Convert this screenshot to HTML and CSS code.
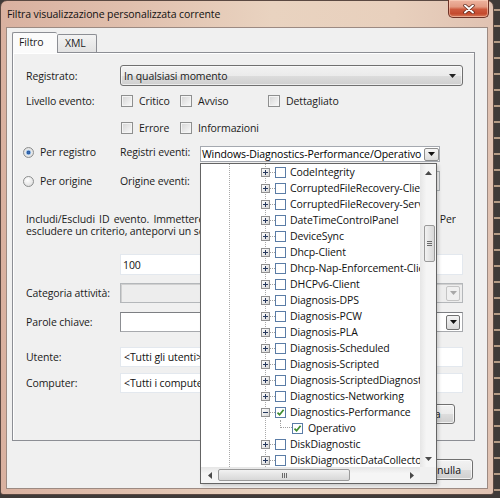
FILE: index.html
```html
<!DOCTYPE html>
<html>
<head>
<meta charset="utf-8">
<title>Filtra visualizzazione personalizzata corrente</title>
<link rel="stylesheet" href="styles.css">
</head>
<body>
<div class="desk">
  <div class="window">
    <div class="titlebar">
      <span class="title">Filtra visualizzazione personalizzata corrente</span>
      <div class="close">
        <svg width="12" height="10" viewBox="0 0 12 10"><path d="M2 1.5 L10 8.5 M10 1.5 L2 8.5" stroke="#5a2418" stroke-width="3.4" stroke-linecap="round"/><path d="M2 1.5 L10 8.5 M10 1.5 L2 8.5" stroke="#ffffff" stroke-width="1.9" stroke-linecap="round"/></svg>
      </div>
    </div>
    <div class="client">
      <div class="tabs">
        <div class="tab active">Filtro</div>
        <div class="tab">XML</div>
      </div>
      <div class="panel">
        <div class="row r-reg">
          <span class="label">Registrato:</span>
          <div class="combo ro"><span class="ctext">In qualsiasi momento</span><svg class="arrow" width="7" height="4" viewBox="0 0 7 4"><path d="M0 0 H7 L3.5 4 Z" fill="#222"/></svg></div>
        </div>
        <div class="row r-chk1">
          <span class="label">Livello evento:</span>
          <label class="chk w59"><span class="box"></span>Critico</label>
          <label class="chk w88"><span class="box"></span>Avviso</label>
          <label class="chk"><span class="box"></span>Dettagliato</label>
        </div>
        <div class="row r-chk2">
          <span class="label"></span>
          <label class="chk w59"><span class="box"></span>Errore</label>
          <label class="chk"><span class="box"></span>Informazioni</label>
        </div>
        <div class="row r-rad1">
          <label class="radio"><span class="dot on"></span>Per registro</label>
          <span class="sublabel">Registri eventi:</span>
          <div class="edcombo"><span class="ctext">Windows-Diagnostics-Performance/Operativo</span><span class="dbtn"><svg width="7" height="4" viewBox="0 0 7 4"><path d="M0 0 H7 L3.5 4 Z" fill="#111"/></svg></span></div>
        </div>
        <div class="row r-rad2">
          <label class="radio"><span class="dot"></span>Per origine</label>
          <span class="sublabel">Origine eventi:</span>
          <div class="edcombo dis"></div>
        </div>
        <div class="para">
          <span class="pline1">Includi/Escludi ID evento. Immettere numeri ID e/o intervalli ID separati da virgole. Per</span>
          <span class="pline2">escludere un criterio, anteporvi un segno meno. Ad esempio 1,3,5-99,-76</span>
        </div>
        <div class="row r-100">
          <span class="label"></span>
          <div class="field">100</div>
        </div>
        <div class="row r-cat">
          <span class="label">Categoria attività:</span>
          <div class="field dis"><span class="fbtn dis"><svg width="7" height="4" viewBox="0 0 7 4"><path d="M0 0 H7 L3.5 4 Z" fill="#a8a8a8"/></svg></span></div>
        </div>
        <div class="row r-kw">
          <span class="label">Parole chiave:</span>
          <div class="field dark"><span class="fbtn"><svg width="7" height="4" viewBox="0 0 7 4"><path d="M0 0 H7 L3.5 4 Z" fill="#111"/></svg></span></div>
        </div>
        <div class="row r-usr">
          <span class="label">Utente:</span>
          <div class="field">&lt;Tutti gli utenti&gt;</div>
        </div>
        <div class="row r-cmp">
          <span class="label">Computer:</span>
          <div class="field">&lt;Tutti i computer&gt;</div>
        </div>
        <div class="row r-clr">
          <button class="btn clr">Cancella</button>
        </div>
      </div>
      <div class="buttons">
        <button class="btn">OK</button>
        <button class="btn cancel">Annulla</button>
      </div>
    </div>

    <div class="droplist">
      <div class="dl-main">
        <div class="tree">
          <div class="node"><span class="exp"></span><span class="hl"></span><span class="cb"></span><span class="lbl">CodeIntegrity</span></div>
          <div class="node"><span class="exp"></span><span class="hl"></span><span class="cb"></span><span class="lbl">CorruptedFileRecovery-Client</span></div>
          <div class="node"><span class="exp"></span><span class="hl"></span><span class="cb"></span><span class="lbl">CorruptedFileRecovery-Server</span></div>
          <div class="node"><span class="exp"></span><span class="hl"></span><span class="cb"></span><span class="lbl">DateTimeControlPanel</span></div>
          <div class="node"><span class="exp"></span><span class="hl"></span><span class="cb"></span><span class="lbl">DeviceSync</span></div>
          <div class="node"><span class="exp"></span><span class="hl"></span><span class="cb"></span><span class="lbl">Dhcp-Client</span></div>
          <div class="node"><span class="exp"></span><span class="hl"></span><span class="cb"></span><span class="lbl">Dhcp-Nap-Enforcement-Client</span></div>
          <div class="node"><span class="exp"></span><span class="hl"></span><span class="cb"></span><span class="lbl">DHCPv6-Client</span></div>
          <div class="node"><span class="exp"></span><span class="hl"></span><span class="cb"></span><span class="lbl">Diagnosis-DPS</span></div>
          <div class="node"><span class="exp"></span><span class="hl"></span><span class="cb"></span><span class="lbl">Diagnosis-PCW</span></div>
          <div class="node"><span class="exp"></span><span class="hl"></span><span class="cb"></span><span class="lbl">Diagnosis-PLA</span></div>
          <div class="node"><span class="exp"></span><span class="hl"></span><span class="cb"></span><span class="lbl">Diagnosis-Scheduled</span></div>
          <div class="node"><span class="exp"></span><span class="hl"></span><span class="cb"></span><span class="lbl">Diagnosis-Scripted</span></div>
          <div class="node"><span class="exp"></span><span class="hl"></span><span class="cb"></span><span class="lbl">Diagnosis-ScriptedDiagnosticsProvider</span></div>
          <div class="node"><span class="exp"></span><span class="hl"></span><span class="cb"></span><span class="lbl">Diagnostics-Networking</span></div>
          <div class="node"><span class="exp minus"></span><span class="hl"></span><span class="cb"><svg width="9" height="9" viewBox="0 0 9 9"><path d="M1.5 4.6 L3.6 6.8 L7.6 1.8" fill="none" stroke="#3d8b2f" stroke-width="1.7"/></svg></span><span class="lbl">Diagnostics-Performance</span></div>
          <div class="node child"><span class="conn"></span><span class="cb"><svg width="9" height="9" viewBox="0 0 9 9"><path d="M1.5 4.6 L3.6 6.8 L7.6 1.8" fill="none" stroke="#3d8b2f" stroke-width="1.7"/></svg></span><span class="lbl">Operativo</span></div>
          <div class="node"><span class="exp"></span><span class="hl"></span><span class="cb"></span><span class="lbl">DiskDiagnostic</span></div>
          <div class="node"><span class="exp"></span><span class="hl"></span><span class="cb"></span><span class="lbl">DiskDiagnosticDataCollector</span></div>
        </div>
        <div class="vscroll">
          <div class="sbtn"><svg width="7" height="4" viewBox="0 0 7 4"><path d="M0 4 H7 L3.5 0 Z" fill="#4a4a4a"/></svg></div>
          <div class="vtrack"><div class="vthumb"><svg width="5" height="5" viewBox="0 0 5 5"><path d="M0 .5 H5 M0 2.5 H5 M0 4.5 H5" stroke="#6a6a6a" stroke-width="1"/></svg></div></div>
          <div class="sbtn"><svg width="7" height="4" viewBox="0 0 7 4"><path d="M0 0 H7 L3.5 4 Z" fill="#4a4a4a"/></svg></div>
        </div>
      </div>
      <div class="dl-bottom">
        <div class="hscroll">
          <div class="sbtn h"><svg width="4" height="7" viewBox="0 0 4 7"><path d="M4 0 V7 L0 3.5 Z" fill="#4a4a4a"/></svg></div>
          <div class="htrack"><div class="hthumb"><svg width="5" height="5" viewBox="0 0 5 5"><path d="M.5 0 V5 M2.5 0 V5 M4.5 0 V5" stroke="#6a6a6a" stroke-width="1"/></svg></div></div>
          <div class="sbtn h"><svg width="4" height="7" viewBox="0 0 4 7"><path d="M0 0 V7 L4 3.5 Z" fill="#4a4a4a"/></svg></div>
        </div>
        <div class="corner"></div>
      </div>
    </div>
  </div>
</div>
</body>
</html>
```

FILE: styles.css
```css
* { box-sizing: border-box; }
html, body { margin: 0; padding: 0; }
body {
  width: 500px; height: 498px; overflow: hidden;
  font-family: "Open Sans", "Noto Sans", "DejaVu Sans", sans-serif;
  font-size: 10.5px; letter-spacing: -0.1px; color: #1b1b1b;
}
.desk {
  width: 500px; height: 498px;
  background:
    repeating-linear-gradient(to bottom, #3f3a38 0 9px, #b49a84 9px 11px, #3f3a38 11px 16px),
    #3f3a38;
}
.window {
  position: relative;
  width: 494px; height: 495px;
  border: 1px solid #5b4942;
  border-radius: 7px 7px 3px 3px;
  background: linear-gradient(to right, #d9b1a0 0%, #e0bfad 25%, #e9d3c0 55%, #e8d0bd 80%, #e0c2b2 100%);
  padding: 0 5px;
  display: flex; flex-direction: column;
}
.titlebar { height: 26px; display: flex; align-items: center; }
.title { padding-left: 1px; font-size: 10.5px; color: #111; margin-top: -1px; }
.close {
  position: absolute; left: 447px; top: -1px;
  width: 41px; height: 18px;
  border: 1px solid #6e3226; border-top: none;
  border-radius: 0 0 5px 5px;
  background: linear-gradient(to bottom, #eeb4a0 0%, #e39a82 40%, #cd5a3e 55%, #c44a2e 80%, #d67a5a 100%);
  display: flex; align-items: center; justify-content: center;
  box-shadow: inset 0 0 0 1px rgba(255,220,200,.5);
}
.client {
  height: 462px;
  border: 1px solid #9c8a82;
  background: #f0f0f0;
  padding: 4px 0 0 5px;
  display: flex; flex-direction: column;
}
.tabs { display: flex; align-items: flex-end; height: 20px; }
.tab {
  height: 18px; width: 40px;
  border: 1px solid #8c8e94; border-bottom: none;
  background: linear-gradient(#f3f3f3, #e2e2e2);
  padding-left: 7px; line-height: 17px;
  border-radius: 2px 2px 0 0;
}
.tab.active {
  width: 45px; height: 21px; margin-bottom: -1px;
  background: #fbfbfb; position: relative; z-index: 1;
  line-height: 19px; padding-left: 6px;
  border-right: none;
}
.panel {
  width: 463px; height: 389px;
  border: 1px solid #8c8e94;
  background: #f0f0f0;
  box-shadow: inset 1px 1px 0 #fff;
  padding: 12px 11px 0 13px;
  display: flex; flex-direction: column;
}
.row { display: flex; align-items: center; }
.label { width: 94px; flex: none; }
.r-reg { height: 21px; }
.r-chk1 { margin-top: 2px; height: 26px; }
.r-chk2 { height: 27px; }
.r-rad1 { margin-top: 1px; height: 20px; }
.r-rad2 { margin-top: 9px; height: 20px; }
.para { margin-top: 22px; line-height: 12px; white-space: nowrap; display: flex; flex-direction: column; }
.pline1 { display: block; width: 430px; overflow: hidden; text-align: justify; text-align-last: justify; white-space: normal; height: 12px; }
.pline2 { display: block; }
.r-100 { margin-top: 17px; height: 21px; }
.r-cat { margin-top: 8px; height: 20px; }
.r-kw { margin-top: 9px; height: 20px; }
.r-usr { margin-top: 15px; height: 20px; }
.r-cmp { margin-top: 6px; height: 20px; }
.r-clr { margin-top: 11px; height: 20px; justify-content: flex-end; padding-right: 8px; }

.combo.ro {
  flex: 1; height: 21px;
  border: 1px solid #707070; border-radius: 3px;
  background: linear-gradient(to bottom, #f2f2f2 0%, #ebebeb 50%, #dddddd 50%, #cfcfcf 100%);
  box-shadow: inset 0 0 0 1px rgba(255,255,255,.6);
  display: flex; align-items: center; justify-content: space-between;
  padding: 0 6px 0 3px;
}
.chk { display: flex; align-items: center; flex: none; }
.chk .box {
  width: 12px; height: 12px; margin: 0 6px 0 1px;
  border: 1px solid #8e8f8f;
  background: linear-gradient(135deg, #d4d4d4 0%, #ebebeb 60%, #fafafa 100%);
  box-shadow: inset 0 0 0 1px #f4f4f4;
}
.w59 { width: 59px; }
.w88 { width: 88px; }

.radio { display: flex; align-items: center; width: 97px; margin-left: -3px; flex: none; }
.dot {
  width: 11px; height: 11px; border-radius: 50%; margin-right: 6px;
  border: 1px solid #8c8e8e;
  background: radial-gradient(circle at 40% 35%, #ffffff 0%, #e8e8e8 60%, #cfcfcf 100%);
}
.dot.on {
  background: radial-gradient(circle at 50% 50%, #3a6fb8 0%, #2a5aa0 22%, #9cc0e6 34%, #eaeaea 50%, #cfcfcf 100%);
}
.sublabel { width: 80px; flex: none; }
.edcombo {
  width: 240px; height: 16px; align-self: flex-end;
  border: 1px solid #a5a9b0; background: #fff;
  display: flex; align-items: center; justify-content: space-between;
  padding-left: 1px; white-space: nowrap; overflow: hidden;
}
.edcombo .ctext { color: #000; }
.dbtn {
  width: 15px; height: 13px; flex: none;
  border: 1px solid #8d8d8d; border-radius: 2px;
  background: linear-gradient(#f6f6f6, #dcdcdc);
  display: flex; align-items: center; justify-content: center;
}
.edcombo.dis { height: 20px; align-self: center; background: #f0f0f0; border-color: #adb2b5; }

.field {
  flex: 1; height: 100%;
  border: 1px solid #e3e8ee; background: #fff;
  display: flex; align-items: center; justify-content: space-between;
  padding: 0 2px 0 3px; color: #111;
}
.r-100 .field { padding-left: 2px; }
.field.dis { background: #ededed; border-color: #b4b7ba; box-shadow: inset 1px 1px 0 #d0d0d0; justify-content: flex-end; }
.field.dark { border-color: #a7a9ad; border-top-color: #7d7f83; border-left-color: #8c8e92; justify-content: flex-end; }
.fbtn {
  width: 14px; height: 15px;
  border: 1px solid #707070; border-radius: 2px;
  background: linear-gradient(#f4f4f4, #d9d9d9);
  display: flex; align-items: center; justify-content: center;
}
.fbtn.dis { border-color: #c4c4c4; background: #f0f0f0; }

.btn {
  font: inherit; color: #111;
  width: 75px; height: 21px;
  border: 1px solid #707070; border-radius: 3px;
  background: linear-gradient(to bottom, #f2f2f2 0%, #ebebeb 50%, #dddddd 50%, #cfcfcf 100%);
  box-shadow: inset 0 0 0 1px rgba(255,255,255,.7);
  padding: 0;
}
.btn.cancel { padding-left: 14px; }
.btn.clr { width: 62px; height: 20px; padding-right: 8px; }
.buttons { display: flex; justify-content: flex-end; gap: 5px; margin-top: 18px; padding-right: 14px; }

.droplist {
  position: absolute; left: 199px; top: 162px;
  width: 237px; height: 321px;
  border: 1px solid #646464;
  background: #fff;
  display: flex; flex-direction: column;
  box-shadow: 2px 2px 3px rgba(0,0,0,.15);
}
.dl-main { display: flex; height: 303px; }
.tree {
  width: 219px; height: 303px; overflow: hidden;
  background:
    repeating-linear-gradient(to bottom, #a9a9a9 0 1px, transparent 1px 2px) 28px 0 / 1px 100% no-repeat,
    repeating-linear-gradient(to bottom, #a9a9a9 0 1px, transparent 1px 2px) 64px 0 / 1px 100% no-repeat,
    #fff;
}
.node { height: 16px; display: flex; align-items: center; padding-left: 60px; white-space: nowrap; }
.exp {
  width: 9px; height: 9px; flex: none;
  border: 1px solid #919191;
  background:
    linear-gradient(#26395e, #26395e) center / 5px 1px no-repeat,
    linear-gradient(#26395e, #26395e) center / 1px 5px no-repeat,
    linear-gradient(135deg, #ffffff, #d6d6d6);
}
.exp.minus {
  background:
    linear-gradient(#26395e, #26395e) center / 5px 1px no-repeat,
    linear-gradient(135deg, #ffffff, #d6d6d6);
}
.hl { width: 5px; height: 1px; flex: none; border-top: 1px dotted #a0a0a0; }
.cb {
  width: 11px; height: 11px; flex: none;
  border: 1px solid #5a7ca6;
  background: #fff;
  display: flex; align-items: center; justify-content: center;
}
.lbl { margin-left: 4px; color: #111; }
.node.child { padding-left: 79px; }
.conn {
  width: 12px; height: 8px; flex: none; align-self: flex-start;
  border-left: 1px dotted #a0a0a0; border-bottom: 1px dotted #a0a0a0;
}
.node.child .lbl { margin-left: 5px; }

.vscroll {
  width: 16px; height: 303px; flex: none;
  background: linear-gradient(to right, #e6e6e6, #f5f5f5 40%, #f5f5f5);
  display: flex; flex-direction: column;
}
.sbtn { width: 16px; height: 17px; display: flex; align-items: center; justify-content: center; flex: none; }
.sbtn.h { width: 17px; height: 16px; }
.vtrack { flex: 1; padding-top: 44px; }
.vthumb {
  width: 11px; height: 37px; margin-left: 4px;
  border: 1px solid #9a9a9a; border-radius: 2px;
  background: linear-gradient(to right, #f2f2f2, #e4e4e4 50%, #d8d8d8);
  display: flex; align-items: center; justify-content: center;
}
.dl-bottom { display: flex; height: 16px; }
.hscroll {
  width: 219px; height: 16px;
  background: linear-gradient(to bottom, #e6e6e6, #f5f5f5 40%, #f5f5f5);
  display: flex;
}
.htrack { flex: 1; }
.hthumb {
  width: 132px; height: 12px; margin-top: 2px;
  border: 1px solid #9a9a9a; border-radius: 2px;
  background: linear-gradient(to bottom, #f2f2f2, #e4e4e4 50%, #d8d8d8);
  display: flex; align-items: center; justify-content: center;
}
.corner { width: 16px; height: 16px; background: #f0f0f0; }
```
